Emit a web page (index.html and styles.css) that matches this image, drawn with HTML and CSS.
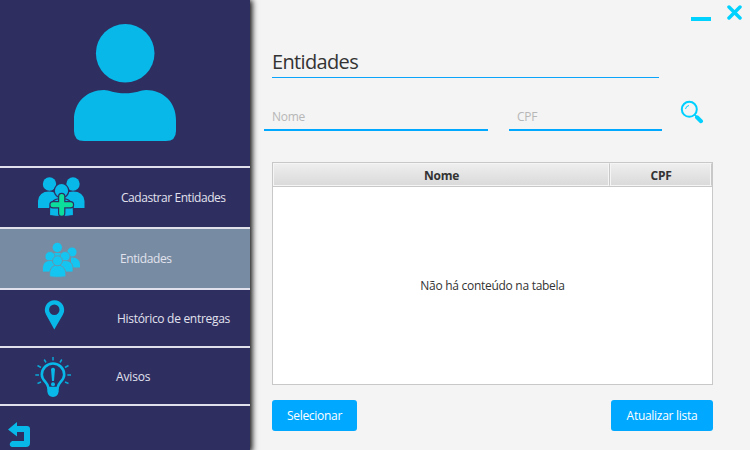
FILE: index.html
```html
<!DOCTYPE html>
<html lang="pt-BR">
<head>
<meta charset="utf-8">
<title>Entidades</title>
<link rel="stylesheet" href="styles.css">
</head>
<body>
<div class="window">
  <aside class="sidebar">
    <div class="profile">
      <svg width="104" height="120" viewBox="73 22 104 120"><circle cx="125.2" cy="53.2" r="29.3"/><path d="M104 90C109 90 114 93.300 125 93.300S141 90 146 90C163 90 176 102 176 120V131Q176 141 166 141H84Q74 141 74 131V120C74 102 87 90 104 90Z"/></svg>
    </div>
    <nav class="menu">
      <a class="item item-register">
        <svg width="110" height="59" viewBox="0 168 110 59">
          <circle cx="49.500" cy="184" r="6.700"/><circle cx="73" cy="184" r="6.700"/>
          <path d="M38 208V201Q39 191.500 49 191.500Q57 191.500 60 199L58 208ZM84.500 208V201Q83.500 191.500 73 191.500Q65 191.500 62 199L65 208Z"/>
          <path class="gap" d="M49.500 215.500V211Q49.500 198.500 61.500 198.500Q73.500 198.500 73.500 211V215.500Q61 217.500 49.500 215.500Z"/>
          <circle class="gap" cx="61.500" cy="190.700" r="7.200"/>
          <path class="plus-edge" d="M61.700 196.500V213.200M53 204.800H70.500"/>
          <path class="plus" d="M61.700 196.500V213.200M53 204.800H70.500"/>
        </svg>
        <span class="label">Cadastrar Entidades</span>
      </a>
      <a class="item item-entities active">
        <svg width="110" height="59" viewBox="0 229 110 59">
          <circle cx="57.300" cy="247.500" r="4.700"/><circle cx="72" cy="252" r="4.600"/><path d="M52 257V253H62V257ZM71 267.500V257.500Q80 257 80 265V267.500Z"/>
          <circle class="gap" cx="50" cy="256.500" r="5"/><circle class="gap" cx="65" cy="256.500" r="5"/>
          <path class="gap" d="M42.500 272V267Q43.500 260.500 50 260.500Q56 260.500 57 267V272ZM57 272V267Q58 260.500 65 260.500Q72 260.500 73 267V272Z"/>
          <path class="gap" d="M49.700 276.700V272Q51 265 57.500 265Q64 265 65.800 272V276.700Q57 278 49.700 276.700Z"/><circle class="gap" cx="57.500" cy="260.800" r="5"/>
        </svg>
        <span class="label">Entidades</span>
      </a>
      <a class="item item-history">
        <svg width="110" height="56" viewBox="0 290 110 56"><path fill-rule="evenodd" d="M54.300 329.500L46 314.500A9.700 9.700 0 1 1 63 314.500ZM54.300 304.500A5.200 5.200 0 1 0 54.300 314.900A5.200 5.200 0 1 0 54.300 304.500Z"/></svg>
        <span class="label">Histórico de entregas</span>
      </a>
      <a class="item item-alerts">
        <svg width="110" height="56" viewBox="0 348 110 56">
          <path class="bulb" d="M48.500 388C48 382 41.800 381 41.800 374.700A11.200 11.200 0 0 1 64.200 374.700C64.200 381 58 382 57.500 388Z"/>
          <path d="M47.300 387H58.700V391.500Q58 396.500 53 397Q48 396.500 47.300 391.500ZM51 369Q53 366.500 55 369L54 381H52Z"/><circle cx="53" cy="384.200" r="2"/>
          <path class="rays" d="M53 357V360.500M44.200 359.500L46 362.500M61.800 359.500L60 362.500M37.500 365.500L41 367.500M68.500 365.500L65 367.500M35.300 375H39M67.300 375H71M37.500 383.500L41 382M68.500 383.500L65 382"/>
        </svg>
        <span class="label">Avisos</span>
      </a>
    </nav>
    <svg class="back" width="22" height="25" viewBox="8 422 22 25"><path d="M8 429.500L17 422V426H27Q30 426 30 429V443Q30 447 26 447H12Q9 446 10 443L12 441H24V432H17V436.500Z"/></svg>
  </aside>
  <main class="content">
    <div class="controls">
      <svg width="52" height="16" viewBox="691 5 52 16"><path class="minimize" d="M691 17H711V21H691Z"/><path class="close" d="M729 7L740 18M740 7L729 18"/></svg>
    </div>
    <h1 class="title">Entidades</h1>
    <form class="search">
      <input class="field field-name" placeholder="Nome">
      <input class="field field-cpf" placeholder="CPF">
      <svg class="lens" width="24" height="24" viewBox="680 100 24 24"><circle cx="689.300" cy="109.300" r="7.500"/><path class="shine" d="M685.500 109Q686 106 689 105.500"/><path class="handle" d="M697 117.300L701 121.200"/><path class="neck" d="M694.500 114.500L697 117"/></svg>
    </form>
    <section class="table">
      <div class="head"><div class="col">Nome</div><div class="col">CPF</div></div>
      <div class="empty">Não há conteúdo na tabela</div>
    </section>
    <div class="actions"><button class="select">Selecionar</button><button class="refresh">Atualizar lista</button></div>
  </main>
</div>
</body>
</html>
```
FILE: styles.css
```css
* { box-sizing: border-box; }
body { margin: 0; background: #f4f4f4; font: 12px "Open Sans", "Noto Sans", sans-serif; letter-spacing: -0.28px; color: #333; }
.window { display: flex; width: 750px; height: 450px; overflow: hidden; }
svg { display: block; flex: none; fill: #08b8e8; }
.sidebar { position: relative; flex: none; width: 250px; height: 450px; background: #2e2e60; box-shadow: 1px 1px 6px 1px #000; display: flex; flex-direction: column; }
.profile { height: 166px; padding: 22px 0 0 73px; }
.menu { border-top: 2px solid #e0e0ec; }
.item { display: flex; height: 61px; border-bottom: 2px solid #e0e0ec; color: #e2e2ee; }
.item-history, .item-alerts { height: 58px; }
.active { background: #778ca2; }
.active svg { fill: #13c5f0; }
.label { line-height: 60px; white-space: nowrap; }
.item-register .label { margin-left: 11px; letter-spacing: -0.44px; }
.item-entities .label { margin-left: 10px; letter-spacing: -0.4px; }
.item-history .label { margin-left: 7px; line-height: 58px; letter-spacing: -0.3px; }
.item-alerts .label { margin-left: 6px; line-height: 58px; letter-spacing: -0.15px; }
.gap { stroke: #2e2e60; stroke-width: 1.2; }
.active .gap { stroke: #778ca2; stroke-width: .8; }
.plus, .plus-edge { fill: none; stroke: #0cdf9c; stroke-width: 5; stroke-linecap: round; }
.plus-edge { stroke: #2e2e60; stroke-width: 7.4; }
.bulb { fill: none; stroke: #08b8e8; stroke-width: 2.6; }
.rays { fill: none; stroke: #08a6d4; stroke-width: 1.5; }
.back { margin: 16px 0 0 8px; }
.content { width: 500px; padding: 5px 37px 0 22px; }
.controls { display: flex; justify-content: flex-end; margin-right: -30px; }
.minimize { fill: #00d2ff; }
.close { fill: none; stroke: #00d2ff; stroke-width: 3.5; stroke-linecap: round; }
.title { width: 387px; height: 29px; margin: 28px 0 0; border-bottom: 1px solid #0aa5fa; font-size: 20px; line-height: 26px; font-weight: 400; letter-spacing: -0.65px; }
.search { display: flex; height: 53px; margin-left: -8px; }
.field { height: 53px; padding: 25px 8px 0; border: 0; border-bottom: 2px solid #00a8ff; background: transparent; font: inherit; letter-spacing: inherit; outline: 0; }
.field::placeholder { color: #b7b7b7; opacity: 1; }
.field-name { width: 224px; }
.field-cpf { width: 153px; margin-left: 21px; }
.lens { margin: 22px 0 0 18px; fill: none; stroke: #00d0ff; stroke-width: 2; }
.shine { stroke-width: 1; }
.handle { stroke-width: 4; stroke-linecap: round; }
.neck { stroke-width: 1.5; }
.table { width: 441px; height: 223px; margin-top: 31px; border: 1px solid #c8c8c8; background: #fff; }
.head { display: flex; height: 24px; border-bottom: 1px solid #c8c8c8; }
.col { flex: none; width: 337px; border: 1px solid #f5f5f5; border-right: 1px solid #c8c8c8; background: linear-gradient(#eee, #dadada); font-weight: 700; line-height: 23px; text-align: center; box-shadow: inset -1px 0 #f5f5f5; }
.col:last-child { width: 102px; }
.empty { height: 197px; line-height: 198px; text-align: center; }
.actions { display: flex; justify-content: space-between; margin-top: 15px; }
button { height: 31px; padding: 0; border: 0; border-radius: 3px; background: #00a8ff; color: #fff; font: inherit; letter-spacing: inherit; }
.select { width: 85px; }
.refresh { width: 102px; }
```
